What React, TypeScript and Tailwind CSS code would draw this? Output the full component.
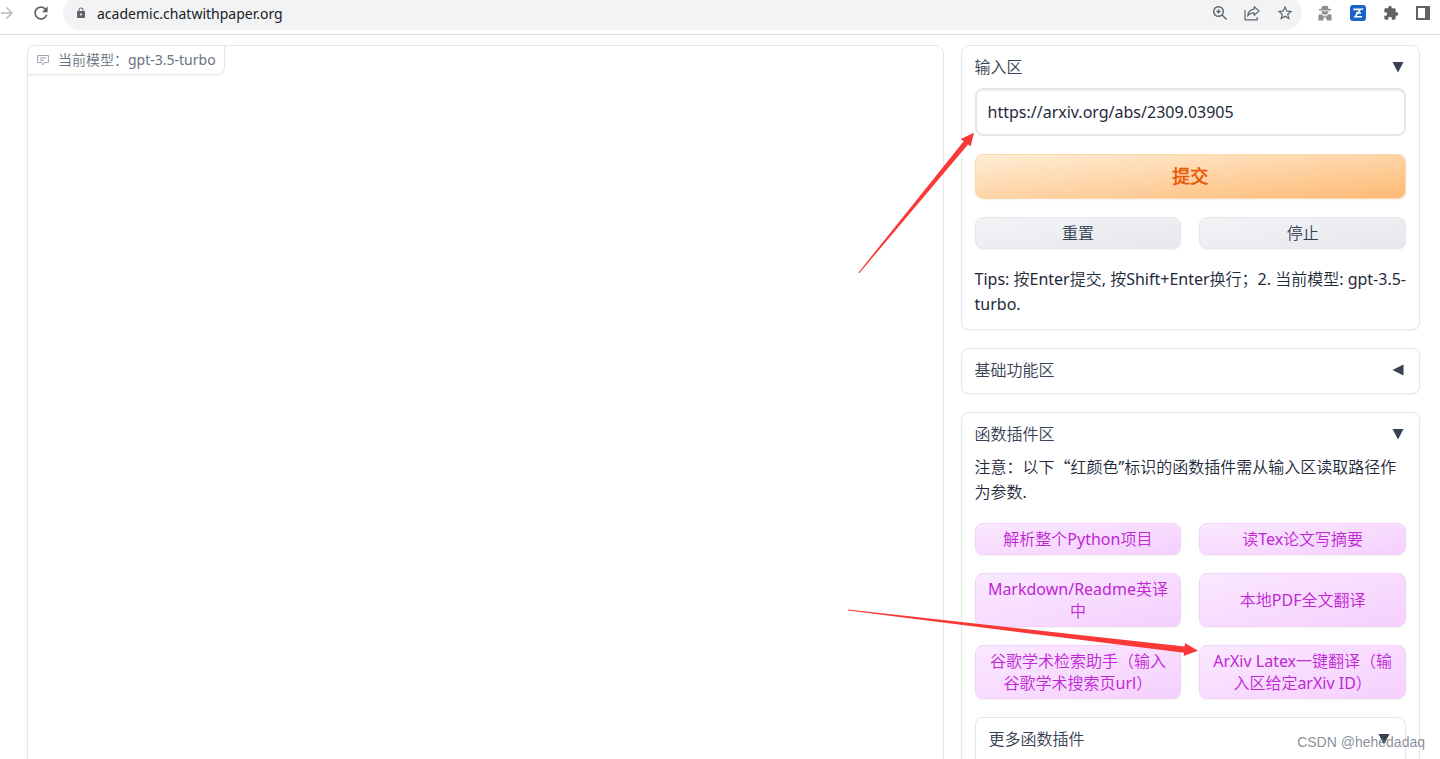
import { ReactNode, useState } from "react";
import { MdArrowForward, MdExtension, MdLock, MdRefresh, MdStarOutline } from "react-icons/md";


const PLUGINS = [
    "解析整个Python项目",
    "读Tex论文写摘要",
    "Markdown/Readme英译中",
    "本地PDF全文翻译",
    "谷歌学术检索助手（输入谷歌学术搜索页url）",
    "ArXiv Latex一键翻译（输入区给定arXiv ID）",
];

function ZoomIcon() {
    return (
        <svg viewBox="0 0 16 16" className="size-4" fill="none" stroke="#5f6368" strokeWidth="1.4">
            <circle cx="6.5" cy="6.5" r="4.8" />
            <path d="M10 10l4.6 4.6M6.5 4.4v4.2M4.4 6.5h4.2" />
        </svg>
    )
}

function ShareIcon() {
    return (
        <svg viewBox="0 0 16 16" className="size-4" fill="none" stroke="#5f6368" strokeWidth="1.2" strokeLinejoin="round">
            <path d="M1 5v9.8h12.2V12" />
            <path d="M10.2 1.6L15 6l-4.8 4.4V7.8C7 7.8 5 8.8 3.6 11.2 4 7.4 6.2 4.6 10.2 4.2z" />
        </svg>
    )
}

function IncognitoIcon() {
    return (
        <svg viewBox="0 0 16 16" className="size-4" fill="#8f8f8f">
            <path d="M5 1.2Q8 .2 11 1.2L11.6 4H14v1.4H2V4h2.4z" />
            <path d="M4.4 6.2h7.2L11 8.4 9.4 9.6H6.6L5 8.4z" />
            <path d="M2 9.2l3 .4L7.2 12 6 15.4H1.4V11zM14 9.2l-3 .4L8.8 12l1.2 3.4h4.6V11z" />
            <path d="M7.2 10.4h1.6v2H7.2z" />
        </svg>
    )
}

function TranslateIcon() {
    return (
        <svg viewBox="0 0 16 16" className="size-4">
            <rect width="16" height="16" rx="3" fill="#1764c4" />
            <path d="M3.4 4.4h7L5 11.8h7M6 8h5M11.6 4.4l1.6-.8" fill="none" stroke="#fff" strokeWidth="1.6" />
        </svg>
    )
}

function SidePanelIcon() {
    return (
        <svg viewBox="0 0 14 14" className="size-[14px]">
            <rect x="1" y="1" width="12" height="12" fill="none" stroke="#5f6368" strokeWidth="2" />
            <path d="M9 1h4v12H9z" fill="#5f6368" />
        </svg>
    )
}

function ChatIcon() {
    return (
        <svg viewBox="0 0 12 12" className="size-3" fill="none" stroke="#9ca3af" strokeWidth="1">
            <path d="M.6 1.5h10.8v7H7.6L6 10.9 4.6 8.5h-4zM3 4h6M3 6.2h4" />
        </svg>
    )
}

function BrowserBar() {
    return (
        <header className="shrink-0 overflow-hidden border-b border-[#dadce0] pb-1">
            <div className="-mt-1 flex h-[34px] items-center pr-[10px]">
                <button aria-label="Forward" className="-ml-[2px] text-[#babcbe]"><MdArrowForward className="size-[18px]" /></button>
                <button aria-label="Reload" className="ml-[15px] text-[#5f6368]"><MdRefresh className="size-5" /></button>
                <div className="ml-3 flex h-full flex-1 items-center rounded-full bg-[#f1f3f4] pr-2 pl-3">
                    <MdLock className="size-3 text-[#5f6368]" />
                    <input
                        aria-label="Address"
                        defaultValue="academic.chatwithpaper.org"
                        className="ml-[10px] min-w-0 flex-1 bg-transparent text-[14px] text-[#202124] outline-none"
                    />
                    <div className="flex items-center gap-4">
                        <button aria-label="Zoom"><ZoomIcon /></button>
                        <button aria-label="Share"><ShareIcon /></button>
                        <button aria-label="Bookmark" className="text-[#5f6368]"><MdStarOutline className="size-[18px]" /></button>
                    </div>
                </div>
                <div className="ml-[15px] flex items-center gap-[17px]">
                    <button aria-label="Incognito"><IncognitoIcon /></button>
                    <button aria-label="Translate"><TranslateIcon /></button>
                    <button aria-label="Extensions" className="text-[#5f6368]"><MdExtension className="size-4" /></button>
                    <button aria-label="Side panel"><SidePanelIcon /></button>
                </div>
            </div>
        </header>
    )
}

function Accordion({title, open = true, children}: {title: string, open?: boolean, children?: ReactNode}) {
    const [expanded, setExpanded] = useState(open);

    return (
        <section className="rounded-lg border border-gray-200 bg-white px-[13px] pt-[10px] pb-3 shadow-xs">
            <button
                aria-expanded={expanded}
                onClick={() => setExpanded(!expanded)}
                className="flex w-full items-center justify-between text-[16px] leading-[22px] text-gray-700"
            >
                <span>{title}</span>
                <svg viewBox="0 0 12 12" className="mr-[2px] size-3" fill="#374151">
                    {expanded ? <path d="M.5 1h11L6 11.5z" /> : <path d="M11.5.5v11L.5 6z" />}
                </svg>
            </button>
            {expanded && children}
        </section>
    )
}

function PluginButton({label}: {label: string}) {
    return (
        <button className="rounded-lg border border-[#f5d0fe] bg-linear-to-br from-[#fae8ff] to-[#f5d0fe] px-2 py-1 text-[16px] leading-[22px] text-[#c026d3] shadow-xs">
            {label}
        </button>
    )
}

function SecondaryButton({label}: {label: string}) {
    return (
        <button className="rounded-lg border border-gray-200 bg-linear-to-br from-gray-100 to-gray-200 px-2 py-1 text-[16px] leading-[22px] text-gray-700 shadow-xs">
            {label}
        </button>
    )
}

// Red pointers drawn over the right hand side of the page
function Pointers() {
    return (
        <svg width="600" height="700" viewBox="840 0 600 700" fill="#fb3838" className="pointer-events-none absolute top-0 right-0">
            <path d="M858.5 272.5L963.7 141.2 960.7 139 974 132.7 970.7 146.3 968 144.6 859.3 273.2z" />
            <path d="M848 609.6L1184.6 646.6 1185 643 1198 650.8 1183.7 656 1184 652.8 848 610.6z" />
        </svg>
    )
}

export default function App() {

    const [link, setLink] = useState("https://arxiv.org/abs/2309.03905");

    return (
        <div className="relative flex h-screen flex-col overflow-hidden bg-white font-['Noto_Sans','Noto_Sans_CJK_SC_DemiLight','Noto_Sans_CJK_SC',sans-serif]">
            <BrowserBar />

            <main className="flex min-h-0 flex-1 gap-[17px] pt-[10px] pr-5 pl-[27px]">
                <section className="h-[1200px] flex-2 overflow-hidden rounded-lg border border-gray-200">
                    <div className="inline-flex items-center gap-[9px] rounded-br-lg border-r border-b border-gray-200 py-1 pr-2 pl-[9px] text-[14px] leading-5 text-gray-500 shadow-xs">
                        <ChatIcon />
                        <span>当前模型：gpt-3.5-turbo</span>
                    </div>
                </section>

                <aside className="flex flex-1 flex-col gap-[18px]">
                    <Accordion title="输入区">
                        <input
                            aria-label="输入区"
                            value={link}
                            onChange={(e) => setLink(e.target.value)}
                            className="mt-[10px] h-12 w-full rounded-lg border-2 border-gray-200 px-[11px] text-[16px] text-gray-800 inset-shadow-xs outline-none"
                        />
                        <button className="mt-[18px] w-full rounded-lg border border-[#fed7aa] bg-linear-to-br from-[#ffedd5] to-[#fdba74] py-2 text-[18px] leading-[27px] font-semibold text-[#ea580c] shadow-xs">
                            提交
                        </button>
                        <div className="mt-[18px] grid grid-cols-2 gap-[18px]">
                            <SecondaryButton label="重置" />
                            <SecondaryButton label="停止" />
                        </div>
                        <p className="mt-[18px] text-[16px] leading-[25px] whitespace-nowrap text-gray-800">
                            Tips: 按Enter提交, 按Shift+Enter换行；2. 当前模型: gpt-3.5-<br />
                            turbo.
                        </p>
                    </Accordion>

                    <Accordion title="基础功能区" open={false} />

                    <Accordion title="函数插件区">
                        <p className="mt-[9px] text-[16px] leading-[25px] text-gray-800">
                            注意：以下<span className="font-['Noto_Sans_CJK_SC',sans-serif]">“</span>红颜色”标识的函数插件需从输入区读取路径作<br />
                            为参数.
                        </p>
                        <div className="mt-[18px] mb-[18px] grid grid-cols-2 gap-[18px]">
                            {PLUGINS.map((label) => <PluginButton key={label} label={label} />)}
                        </div>
                        <Accordion title="更多函数插件">
                            <div className="h-12" />
                        </Accordion>
                    </Accordion>
                </aside>
            </main>

            <Pointers />
            <div className="absolute right-[15px] bottom-2 font-['Liberation_Sans',sans-serif] text-[14px] leading-[18px] text-gray-500/80">
                CSDN @hehedadaq
            </div>
        </div>
    )
}
